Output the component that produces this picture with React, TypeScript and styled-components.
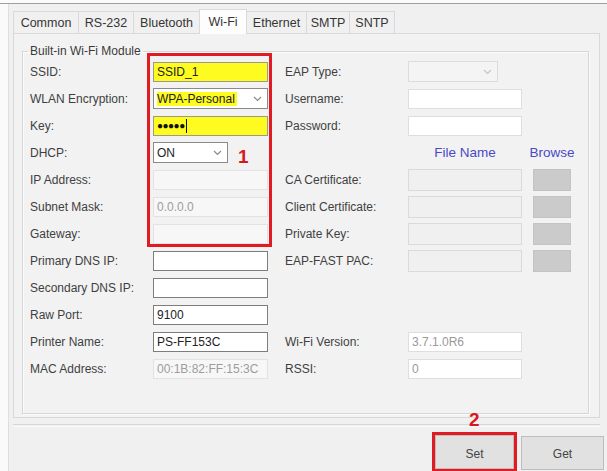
import * as React from 'react';
import styled, { createGlobalStyle, css } from 'styled-components';

const GlobalStyle = createGlobalStyle`
  html, body {
    margin: 0;
    padding: 0;
  }
  body {
    background: #fbfbfb;
    font-family: "Liberation Sans", Arial, sans-serif;
    font-size: 12px;
    color: #3d3d3d;
  }
`;

const Screen = styled.div`
  position: relative;
  width: 607px;
  height: 471px;
  overflow: hidden;
  box-sizing: border-box;
  padding-top: 3px;
  background: #fbfbfb;
`;

const Frame = styled.div`
  display: flex;
  height: 100%;
  border-top: 1px solid #9e9e9e;
`;

const Gutter = styled.div`
  width: 8px;
  flex-shrink: 0;
  background: #fafafa;
`;

const Dialog = styled.div`
  flex: 1;
  display: flex;
  flex-direction: column;
  background: #f0f0f0;
  border-left: 1px solid #dedede;
  padding: 5px 0 0 4px;
`;

const TabStrip = styled.div`
  display: flex;
  align-items: flex-end;
  height: 24px;
`;

const Tab = styled.div<{ $active?: boolean; $width: number }>`
  display: flex;
  align-items: center;
  justify-content: center;
  box-sizing: border-box;
  width: ${(p) => p.$width}px;
  height: ${(p) => (p.$active ? 25 : 22)}px;
  margin-bottom: ${(p) => (p.$active ? -1 : 0)}px;
  border: 1px solid #d9d9d9;
  border-bottom: none;
  margin-right: -1px;
  background: ${(p) => (p.$active ? '#fdfdfd' : '#f0f0f0')};
  font-size: 12.5px;
  color: #353535;
  position: relative;
  z-index: ${(p) => (p.$active ? 1 : 0)};
`;

const TabPanel = styled.div`
  box-sizing: border-box;
  width: 587px;
  height: 391px;
  border: 1px solid #d9d9d9;
  background: #f2f2f2;
  padding: 10px 10px 0 8px;
`;

const GroupBox = styled.fieldset`
  box-sizing: border-box;
  height: 370px;
  margin: 0;
  padding: 0 7px;
  border: 1px solid #d6d6d6;
  box-shadow: inset 1px 1px 0 #fbfbfb, 1px 1px 0 #fbfbfb;
`;

const GroupTitle = styled.legend`
  padding: 0 2px;
  margin-left: -2px;
  line-height: 14px;
  color: #3a3a3a;
`;

const Form = styled.div`
  display: grid;
  grid-template-columns: 123px 115px 17px 123px 114px 11px 38px;
  grid-auto-rows: 27px;
  align-items: center;
`;

type At = { $row: number; $col: number };

const placed = css<At>`
  grid-row: ${(p) => p.$row};
  grid-column: ${(p) => p.$col};
`;

const Label = styled.div<At>`
  ${placed};
  white-space: nowrap;
  color: #3f3f3f;
`;

const ColumnHead = styled.div<At>`
  ${placed};
  justify-self: center;
  font-size: 13.5px;
  color: #4a4ac6;
`;

type Tone = 'normal' | 'soft' | 'disabled' | 'yellow';

const toneStyles: Record<Tone, string> = {
  normal: 'background: #ffffff; border-color: #7d7d7d; color: #222;',
  soft: 'background: #ffffff; border-color: #dedede; color: #999;',
  disabled: 'background: #f7f7f7; border-color: #e2e2e2; color: #9d9d9d;',
  yellow: 'background: #fdfb1f; border-color: #9a9a8a; color: #222;',
};

const TextBox = styled.div<At & { $tone: Tone; $tall?: boolean }>`
  ${placed};
  box-sizing: border-box;
  height: ${(p) => (p.$tall ? 22 : 20)}px;
  display: flex;
  align-items: center;
  padding-left: 3px;
  border: 1px solid;
  white-space: nowrap;
  overflow: hidden;
  ${(p) => toneStyles[p.$tone]};
`;

const FileBox = styled(TextBox)`
  background: #f0f0f0;
  border-color: #dadada;
`;

const Combo = styled.div<At & { $width: number; $disabled?: boolean }>`
  ${placed};
  box-sizing: border-box;
  width: ${(p) => p.$width}px;
  height: 21px;
  display: flex;
  align-items: center;
  justify-content: space-between;
  padding: 0 5px 0 3px;
  border: 1px solid ${(p) => (p.$disabled ? '#dcdcdc' : '#8a8a8a')};
  background: ${(p) => (p.$disabled ? '#f4f4f4' : '#ffffff')};
  color: #222;
`;

const Marked = styled.span`
  background: #fdfb1f;
  padding-right: 2px;
`;

const Dots = styled.span`
  font-size: 10px;
  letter-spacing: -0.5px;
  color: #111;
`;

const Caret = styled.span`
  display: inline-block;
  width: 1px;
  height: 14px;
  margin-left: 1px;
  background: #111;
`;

const BrowseButton = styled.div<At>`
  ${placed};
  box-sizing: border-box;
  height: 22px;
  background: #cbcbcb;
  border: 1px solid #c3c3c3;
`;

const Separator = styled.div`
  margin-top: 6px;
  width: 587px;
  height: 1px;
  border-top: 1px solid #d7d7d7;
  border-bottom: 1px solid #fafafa;
`;

const ButtonBar = styled.div`
  display: flex;
  justify-content: flex-end;
  align-items: flex-start;
  gap: 4px;
  margin-top: 5px;
  padding-right: 3px;
`;

const Highlight = styled.div`
  box-sizing: border-box;
  width: 85px;
  height: 40px;
  border: 3px solid #e01b22;
`;

const PushButton = styled.div<{ $width: number; $offset?: number; $textTop: number }>`
  box-sizing: border-box;
  width: ${(p) => p.$width}px;
  height: 34px;
  margin-top: ${(p) => p.$offset ?? 0}px;
  display: flex;
  align-items: flex-start;
  justify-content: center;
  padding-top: ${(p) => p.$textTop}px;
  background: #e1e1e1;
  border: 1px solid #bdbdbd;
  color: #444;
`;

const Callout = styled.div`
  position: absolute;
  left: 147px;
  top: 53px;
  width: 125px;
  height: 194px;
  box-sizing: border-box;
  border: 3px solid #e01b22;
  pointer-events: none;
`;

const Step = styled.div<{ $x: number; $y: number }>`
  position: absolute;
  left: ${(p) => p.$x}px;
  top: ${(p) => p.$y}px;
  font-size: 19px;
  font-weight: bold;
  line-height: 20px;
  color: #d8181f;
`;

const Chevron = ({ light }: { light?: boolean }) => (
  <svg width="9" height="6" viewBox="0 0 9 6">
    <polyline
      points="1,1 4.5,4.5 8,1"
      fill="none"
      stroke={light ? '#c4c4c4' : '#8a8a8a'}
      strokeWidth="1.2"
    />
  </svg>
);

const tabs: [string, number][] = [
  ['Common', 66],
  ['RS-232', 56],
  ['Bluetooth', 67],
  ['Wi-Fi', 48],
  ['Ethernet', 61],
  ['SMTP', 44],
  ['SNTP', 46],
];

const leftLabels = [
  'SSID:',
  'WLAN Encryption:',
  'Key:',
  'DHCP:',
  'IP Address:',
  'Subnet Mask:',
  'Gateway:',
  'Primary DNS IP:',
  'Secondary DNS IP:',
  'Raw Port:',
  'Printer Name:',
  'MAC Address:',
];

const certRows = ['CA Certificate:', 'Client Certificate:', 'Private Key:', 'EAP-FAST PAC:'];

const WifiSettings = () => (
  <Form>
    {leftLabels.map((text, i) => (
      <Label key={text} $row={i + 1} $col={1}>
        {text}
      </Label>
    ))}

    <TextBox $row={1} $col={2} $tone="yellow">SSID_1</TextBox>
    <Combo $row={2} $col={2} $width={115}>
      <Marked>WPA-Personal</Marked>
      <Chevron />
    </Combo>
    <TextBox $row={3} $col={2} $tone="yellow">
      <Dots>●●●●●</Dots>
      <Caret />
    </TextBox>
    <Combo $row={4} $col={2} $width={75}>
      <span>ON</span>
      <Chevron />
    </Combo>
    <TextBox $row={5} $col={2} $tone="disabled" />
    <TextBox $row={6} $col={2} $tone="disabled">0.0.0.0</TextBox>
    <TextBox $row={7} $col={2} $tone="disabled" />
    <TextBox $row={8} $col={2} $tone="normal" />
    <TextBox $row={9} $col={2} $tone="normal" />
    <TextBox $row={10} $col={2} $tone="normal">9100</TextBox>
    <TextBox $row={11} $col={2} $tone="normal">PS-FF153C</TextBox>
    <TextBox $row={12} $col={2} $tone="disabled">00:1B:82:FF:15:3C</TextBox>

    <Label $row={1} $col={4}>EAP Type:</Label>
    <Combo $row={1} $col={5} $width={90} $disabled>
      <span />
      <Chevron light />
    </Combo>
    <Label $row={2} $col={4}>Username:</Label>
    <TextBox $row={2} $col={5} $tone="soft" />
    <Label $row={3} $col={4}>Password:</Label>
    <TextBox $row={3} $col={5} $tone="soft" />

    <ColumnHead $row={4} $col={5}>File Name</ColumnHead>
    <ColumnHead $row={4} $col={7}>Browse</ColumnHead>
    {certRows.map((text, i) => (
      <React.Fragment key={text}>
        <Label $row={i + 5} $col={4}>{text}</Label>
        <FileBox $row={i + 5} $col={5} $tone="disabled" $tall />
        <BrowseButton $row={i + 5} $col={7} />
      </React.Fragment>
    ))}

    <Label $row={11} $col={4}>Wi-Fi Version:</Label>
    <TextBox $row={11} $col={5} $tone="soft">3.7.1.0R6</TextBox>
    <Label $row={12} $col={4}>RSSI:</Label>
    <TextBox $row={12} $col={5} $tone="soft">0</TextBox>
  </Form>
);

const App = () => (
  <Screen>
    <GlobalStyle />
    <Frame>
      <Gutter />
      <Dialog>
        <TabStrip>
          {tabs.map(([t, w]) => (
            <Tab key={t} $width={w} $active={t === 'Wi-Fi'}>
              {t}
            </Tab>
          ))}
        </TabStrip>
        <TabPanel>
          <GroupBox>
            <GroupTitle>Built-in Wi-Fi Module</GroupTitle>
            <WifiSettings />
          </GroupBox>
        </TabPanel>
        <Separator />
        <ButtonBar>
          <Highlight>
            <PushButton $width={79} $textTop={11}>Set</PushButton>
          </Highlight>
          <PushButton $width={83} $offset={4} $textTop={10}>
            Get
          </PushButton>
        </ButtonBar>
      </Dialog>
    </Frame>
    <Callout />
    <Step $x={238} $y={147}>1</Step>
    <Step $x={469} $y={410}>2</Step>
  </Screen>
);

export default App;
